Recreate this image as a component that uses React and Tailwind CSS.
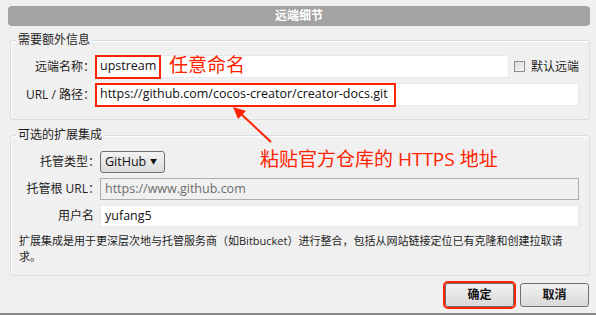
import React from "react";

const font = { fontFamily: '"Segoe UI", "Open Sans", "Noto Sans CJK SC", sans-serif' };

function GroupBox({ title, className, children }) {
  return (
    <div className={"relative rounded-[3px] border border-[#d5dfe5] shadow-[inset_1px_1px_0_#ffffff] " + className}>
      <span className="absolute -top-[8px] left-[5px] bg-[#f0f0f0] px-[2px] text-[12px] leading-[14px] text-[#1e1e1e]">
        {title}
      </span>
      {children}
    </div>
  );
}

function Label({ children, w }) {
  return (
    <div className={"shrink-0 text-right text-[12px] text-[#1e1e1e] " + w}>{children}</div>
  );
}

export default function App() {
  return (
    <div className="relative h-[315px] w-[596px] overflow-hidden bg-[#f0f0f0]" style={font}>
      {/* header */}
      <div className="mx-[8px] mt-[6px] flex h-[20px] w-[582px] items-center justify-center rounded-[4px] bg-[#a3a3a3] text-[12px] font-bold text-white">
        远端细节
      </div>

      {/* group 1 */}
      <GroupBox title="需要额外信息" className="ml-[10px] mt-[14px] h-[80px] w-[580px]">
        <div className="flex flex-col gap-[5px] pt-[14px]">
          <div className="flex h-[23px] items-center">
            <Label w="w-[84px]">远端名称：</Label>
            <div className="flex h-[23px] w-[414px] items-center border border-[#e3e9ef] bg-white px-[4px] text-[12.5px] text-[#111]">
              upstream
            </div>
            <div className="ml-[5px] h-[11px] w-[11px] border border-[#8f8f8f] bg-gradient-to-br from-[#dcdcdc] to-[#f8f8f8]" />
            <span className="ml-[6px] text-[12px] text-[#1e1e1e]">默认远端</span>
          </div>
          <div className="flex h-[23px] items-center">
            <Label w="w-[84px]">URL / 路径：</Label>
            <div className="flex h-[23px] w-[484px] items-center border border-[#e3e9ef] bg-white px-[4px] text-[12.5px] text-[#111]">
              https://github.com/cocos-creator/creator-docs.git
            </div>
          </div>
        </div>
      </GroupBox>

      {/* group 2 */}
      <GroupBox title="可选的扩展集成" className="ml-[10px] mt-[15px] h-[141px] w-[580px]">
        <div className="flex flex-col pt-[15px]">
          <div className="flex h-[22px] items-center">
            <Label w="w-[89px]">托管类型：</Label>
            <div className="flex h-[22px] w-[65px] items-center justify-between rounded-[3px] border border-[#707070] bg-gradient-to-b from-[#f2f2f2] to-[#dcdcdc] pl-[4px] pr-[7px] text-[12.5px] text-[#111]">
              <span>GitHub</span>
              <span className="text-[7px]">▼</span>
            </div>
          </div>
          <div className="mt-[5px] flex h-[22px] items-center">
            <Label w="w-[89px]">托管根 URL：</Label>
            <div className="flex h-[22px] w-[479px] items-center border border-[#adadad] bg-[#f0f0f0] px-[4px] text-[12.5px] text-[#6d6d6d]">
              https://www.github.com
            </div>
          </div>
          <div className="mt-[5px] flex h-[22px] items-center">
            <Label w="w-[83px]">用户名</Label>
            <div className="ml-[6px] flex h-[22px] w-[479px] items-center border border-[#e3e9ef] bg-white px-[4px] text-[12.5px] text-[#111]">
              yufang5
            </div>
          </div>
          <div className="mt-[6px] pl-[8px] text-[11px] leading-[16px] text-[#1e1e1e]">
            <div className="whitespace-nowrap">扩展集成是用于更深层次地与托管服务商（如Bitbucket）进行整合，包括从网站链接定位已有克隆和创建拉取请</div>
            <div>求。</div>
          </div>
        </div>
      </GroupBox>

      {/* buttons */}
      <div className="mr-[7px] mt-[7px] flex justify-end gap-[6px]">
        <div className="flex h-[24px] w-[69px] items-center justify-center rounded-[3px] border border-[#707070] bg-gradient-to-b from-[#f2f2f2] to-[#d9d9d9] text-[12px] font-bold text-[#111] outline outline-2 outline-[#ff2200]">
          确定
        </div>
        <div className="flex h-[24px] w-[69px] items-center justify-center rounded-[3px] border border-[#707070] bg-gradient-to-b from-[#f2f2f2] to-[#d9d9d9] text-[12px] font-bold text-[#111]">
          取消
        </div>
      </div>
      <div className="absolute bottom-0 left-0 h-[2px] w-full bg-[#8a8a8a]" />

      {/* annotations */}
      <div className="absolute left-[95px] top-[55px] h-[24px] w-[66px] border-2 border-[#ff2200]" />
      <div className="absolute left-[95px] top-[83px] h-[24px] w-[301px] border-2 border-[#ff2200]" />
      <div className="absolute left-[169px] top-[53px] text-[19px] leading-[24px] text-[#ff2200]">任意命名</div>
      <div className="absolute left-[260px] top-[147px] text-[19px] leading-[24px] text-[#ff2200]">粘贴官方仓库的 HTTPS 地址</div>
      <svg className="absolute left-0 top-0" width="596" height="315" viewBox="0 0 596 315">
        <line x1="271" y1="142" x2="240" y2="113" stroke="#ff2200" strokeWidth="2" />
        <polygon points="233,107 246,111 238,119" fill="#ff2200" />
      </svg>
    </div>
  );
}
